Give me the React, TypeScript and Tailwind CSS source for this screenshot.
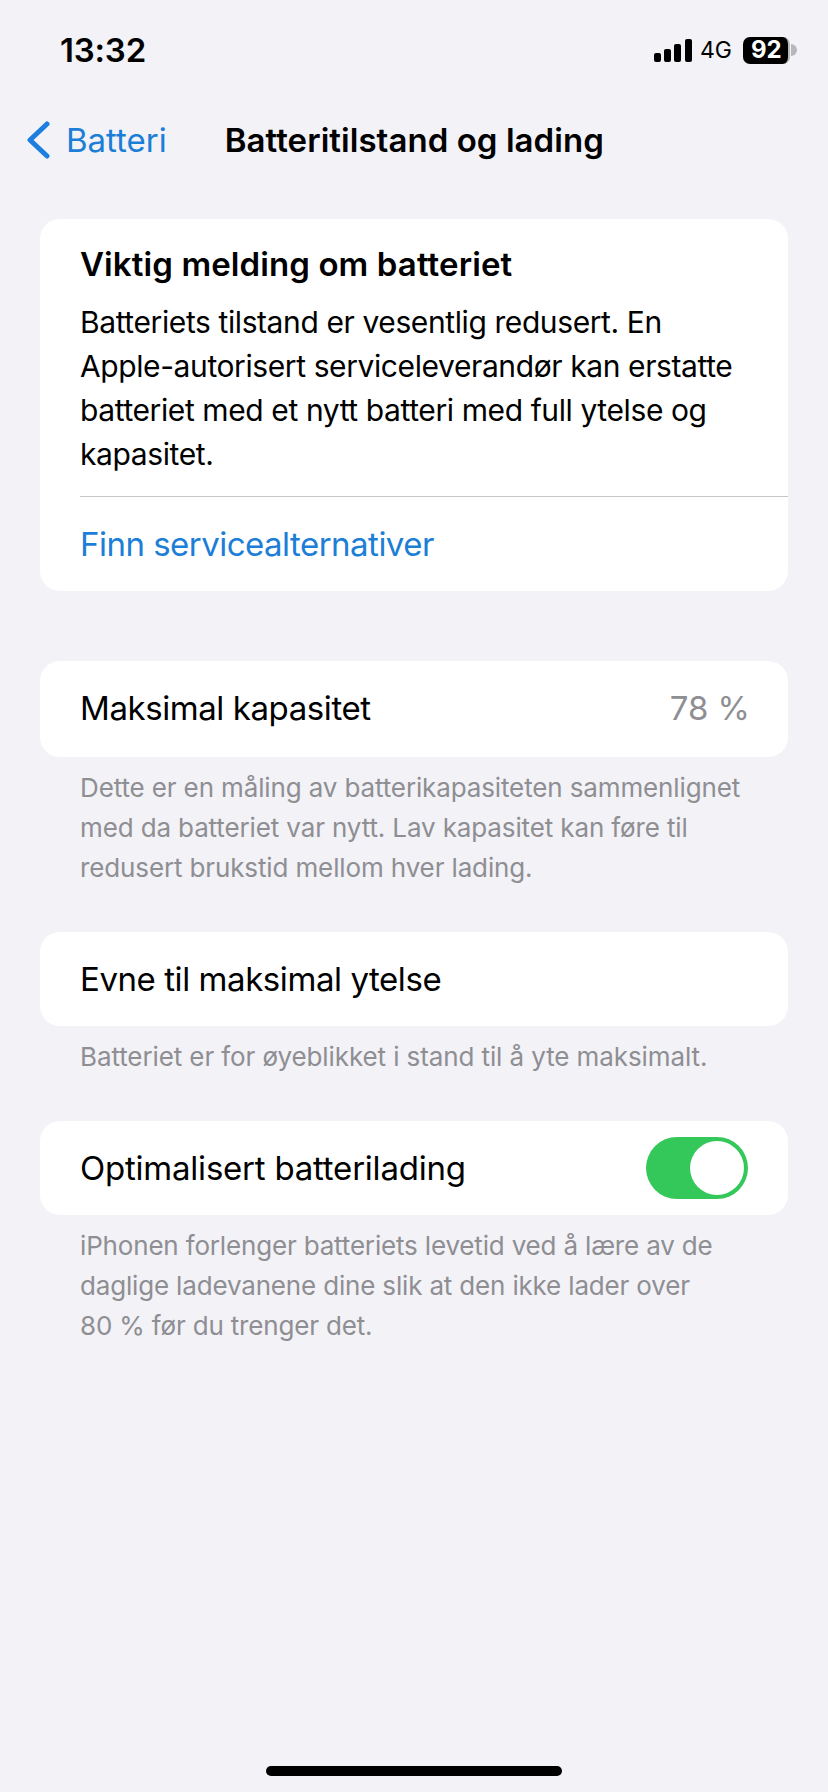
export default function App() {
  const font = { fontFamily: "Inter, 'Liberation Sans', sans-serif" };
  return (
    <div style={font} className="flex h-[1792px] w-[828px] flex-col overflow-hidden bg-[#f2f2f7] text-black">
      <div className="flex h-[100px] items-center justify-between pl-[60px] pr-[31px]">
        <span className="text-[33px] font-semibold leading-none tracking-[-0.2px]">13:32</span>
        <div className="flex items-center">
          <svg width="38" height="23" viewBox="0 0 38 23" className="mr-[8px]">
            <rect x="0" y="14" width="7" height="9" rx="2" fill="#000" />
            <rect x="10" y="10" width="7" height="13" rx="2" fill="#000" />
            <rect x="20" y="5" width="7" height="18" rx="2" fill="#000" />
            <rect x="31" y="0" width="7" height="23" rx="2" fill="#000" />
          </svg>
          <span className="mr-[11px] text-[23px] font-normal leading-none">4G</span>
          <div className="flex h-[27px] w-[47px] items-center rounded-[7px] border-r-[2px] border-[#b8b8bc] bg-black pl-[8px] text-[24px] font-bold leading-none text-white">92</div>
          <svg width="6" height="12" viewBox="0 0 6 12" className="ml-[1px]">
            <path d="M0 0a6 6 0 0 1 0 12z" fill="#b8b8bc" />
          </svg>
        </div>
      </div>

      <div className="flex h-[80px] items-center">
        <svg width="26" height="38" viewBox="0 0 26 38" className="ml-[25px]">
          <path d="M22 3 L5 19 L22 35" fill="none" stroke="#1c7fe0" strokeWidth="5" strokeLinecap="round" strokeLinejoin="round" />
        </svg>
        <span className="ml-[15px] text-[33px] leading-none text-[#1c7ed6]">Batteri</span>
        <span className="ml-[58px] text-[33px] font-semibold leading-none tracking-[0.05px]">Batteritilstand og lading</span>
      </div>

      <div className="mx-[40px] mt-[39px] flex flex-col rounded-[20px] bg-white pl-[40px]">
        <h1 className="mt-[24px] text-[33px] font-semibold leading-[42px] tracking-[0.1px]">Viktig melding om batteriet</h1>
        <p className="mt-[15px] pr-[40px] text-[30px] leading-[44px] tracking-[-0.4px]">
          Batteriets tilstand er vesentlig redusert. En Apple-autorisert serviceleverandør kan erstatte batteriet med et nytt batteri med full ytelse og kapasitet.
        </p>
        <div className="mt-[20px] h-px bg-[#c6c6c8]" />
        <div className="flex h-[94px] items-center text-[33px] leading-none tracking-[-0.52px] text-[#1c7ed6]">Finn servicealternativer</div>
      </div>

      <div className="mx-[40px] mt-[70px] flex h-[96px] items-center justify-between rounded-[20px] bg-white pl-[40px] pr-[38px] text-[33px] tracking-[-0.42px]">
        <span>Maksimal kapasitet</span>
        <span className="text-[#8e8e93] tracking-[0px]">78&nbsp;%</span>
      </div>
      <p className="mx-[80px] mt-[11px] text-[26px] leading-[40px] tracking-[-0.13px] text-[#8e8e93]">
        Dette er en måling av batterikapasiteten sammenlignet med da batteriet var nytt. Lav kapasitet kan føre til redusert brukstid mellom hver lading.
      </p>

      <div className="mx-[40px] mt-[44px] flex h-[94px] items-center rounded-[20px] bg-white px-[40px] pt-[2px] text-[33px] tracking-[-0.43px]">
        <span>Evne til maksimal ytelse</span>
      </div>
      <p className="mx-[80px] mt-[11px] text-[26px] leading-[40px] tracking-[-0.1px] text-[#8e8e93]">
        Batteriet er for øyeblikket i stand til å yte maksimalt.
      </p>

      <div className="mx-[40px] mt-[44px] flex h-[94px] items-center justify-between rounded-[20px] bg-white px-[40px] text-[33px] tracking-[-0.22px]">
        <span className="pt-[2px]">Optimalisert batterilading</span>
        <div className="flex h-[62px] w-[102px] items-center justify-end rounded-full bg-[#34c759] pr-[4px]">
          <div className="h-[54px] w-[54px] rounded-full bg-white" />
        </div>
      </div>
      <p className="mx-[80px] mt-[11px] text-[26px] leading-[40px] tracking-[-0.17px] text-[#8e8e93]">
        iPhonen forlenger batteriets levetid ved å lære av de daglige ladevanene dine slik at den ikke lader over 80&nbsp;% før du trenger det.
      </p>

      <div className="mt-auto mb-[16px] h-[10px] w-[296px] self-center rounded-full bg-black" />
    </div>
  );
}
